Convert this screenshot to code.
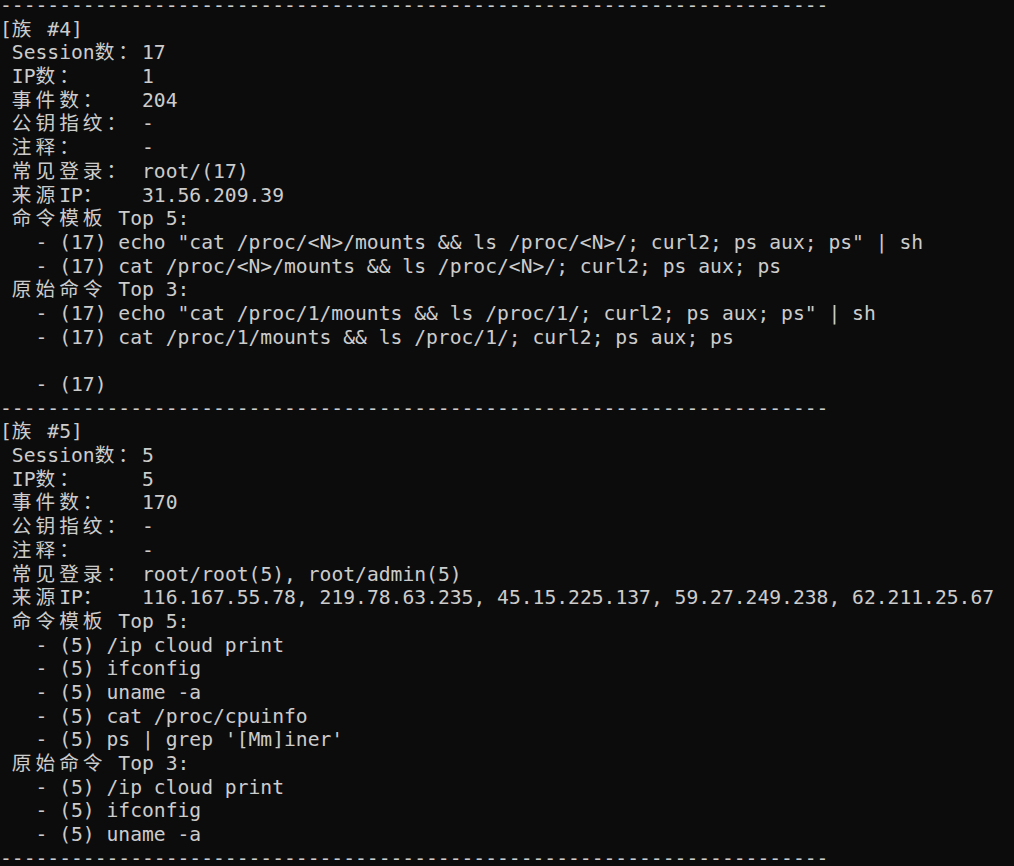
import React from 'react';

const DASHES = '-'.repeat(70);

const lines: string[] = [
  DASHES,
  '[族 #4]',
  ' Session数：17',
  ' IP数：     1',
  ' 事件数：   204',
  ' 公钥指纹： -',
  ' 注释：     -',
  ' 常见登录： root/(17)',
  ' 来源IP：   31.56.209.39',
  ' 命令模板 Top 5:',
  '   - (17) echo "cat /proc/<N>/mounts && ls /proc/<N>/; curl2; ps aux; ps" | sh',
  '   - (17) cat /proc/<N>/mounts && ls /proc/<N>/; curl2; ps aux; ps',
  ' 原始命令 Top 3:',
  '   - (17) echo "cat /proc/1/mounts && ls /proc/1/; curl2; ps aux; ps" | sh',
  '   - (17) cat /proc/1/mounts && ls /proc/1/; curl2; ps aux; ps',
  '',
  '   - (17)',
  DASHES,
  '[族 #5]',
  ' Session数：5',
  ' IP数：     5',
  ' 事件数：   170',
  ' 公钥指纹： -',
  ' 注释：     -',
  ' 常见登录： root/root(5), root/admin(5)',
  ' 来源IP：   116.167.55.78, 219.78.63.235, 45.15.225.137, 59.27.249.238, 62.211.25.67',
  ' 命令模板 Top 5:',
  '   - (5) /ip cloud print',
  '   - (5) ifconfig',
  '   - (5) uname -a',
  '   - (5) cat /proc/cpuinfo',
  "   - (5) ps | grep '[Mm]iner'",
  ' 原始命令 Top 3:',
  '   - (5) /ip cloud print',
  '   - (5) ifconfig',
  '   - (5) uname -a',
  DASHES,
];

// wide (CJK / fullwidth) chars take two terminal cells
const isWide = (ch: string) => ch.charCodeAt(0) >= 0x2e80;

const TermLine = ({ text }: { text: string }) => {
  const parts: React.ReactNode[] = [];
  let buf = '';
  Array.from(text).forEach((ch, i) => {
    if (isWide(ch)) {
      if (buf) parts.push(buf);
      buf = '';
      parts.push(
        <span key={i} className="inline-block w-[23.68px] text-left">
          {ch}
        </span>
      );
    } else {
      buf += ch;
    }
  });
  if (buf) parts.push(buf);
  return <div className="h-[23.7px] whitespace-pre">{parts}</div>;
};

export default function App() {
  return (
    <div className="w-[1014px] h-[866px] overflow-hidden bg-[#0c0c0c]">
      <div className="-mt-[6px] text-[#cccccc] text-[19.67px] leading-[23.7px] font-['DejaVu_Sans_Mono','Noto_Sans_CJK_SC',monospace]">
        {lines.map((l, i) => (
          <TermLine key={i} text={l} />
        ))}
      </div>
    </div>
  );
}
